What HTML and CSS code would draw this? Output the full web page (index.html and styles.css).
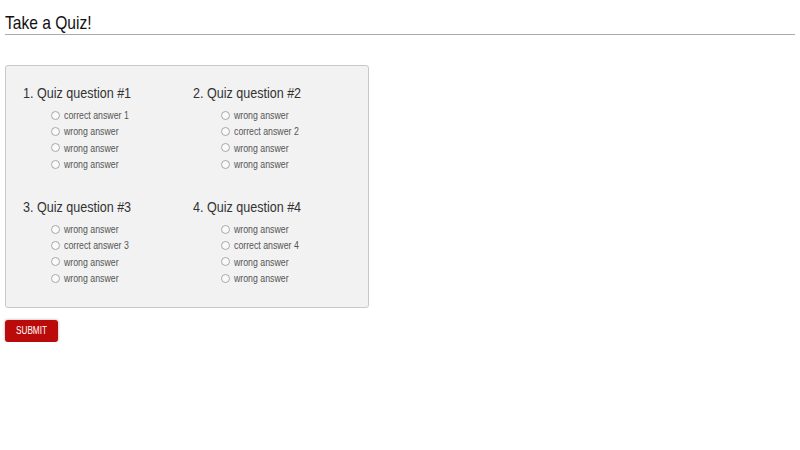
FILE: index.html
```html
<!DOCTYPE html>
<html>
<head>
<meta charset="utf-8">
<title>Take a Quiz!</title>
<link rel="stylesheet" href="styles.css">
</head>
<body>
<h1 class="title"><span class="narrow">Take a Quiz!</span></h1>
<form class="quiz">
  <div class="questions">
    <div class="question">
      <h2 class="q-title"><span class="narrow">1. Quiz question #1</span></h2>
      <ul class="answers">
        <li><label><input type="radio" name="q1"><span class="narrow">correct answer 1</span></label></li>
        <li><label><input type="radio" name="q1"><span class="narrow">wrong answer</span></label></li>
        <li><label><input type="radio" name="q1"><span class="narrow">wrong answer</span></label></li>
        <li><label><input type="radio" name="q1"><span class="narrow">wrong answer</span></label></li>
      </ul>
    </div>
    <div class="question">
      <h2 class="q-title"><span class="narrow">2. Quiz question #2</span></h2>
      <ul class="answers">
        <li><label><input type="radio" name="q2"><span class="narrow">wrong answer</span></label></li>
        <li><label><input type="radio" name="q2"><span class="narrow">correct answer 2</span></label></li>
        <li><label><input type="radio" name="q2"><span class="narrow">wrong answer</span></label></li>
        <li><label><input type="radio" name="q2"><span class="narrow">wrong answer</span></label></li>
      </ul>
    </div>
    <div class="question">
      <h2 class="q-title"><span class="narrow">3. Quiz question #3</span></h2>
      <ul class="answers">
        <li><label><input type="radio" name="q3"><span class="narrow">wrong answer</span></label></li>
        <li><label><input type="radio" name="q3"><span class="narrow">correct answer 3</span></label></li>
        <li><label><input type="radio" name="q3"><span class="narrow">wrong answer</span></label></li>
        <li><label><input type="radio" name="q3"><span class="narrow">wrong answer</span></label></li>
      </ul>
    </div>
    <div class="question">
      <h2 class="q-title"><span class="narrow">4. Quiz question #4</span></h2>
      <ul class="answers">
        <li><label><input type="radio" name="q4"><span class="narrow">wrong answer</span></label></li>
        <li><label><input type="radio" name="q4"><span class="narrow">correct answer 4</span></label></li>
        <li><label><input type="radio" name="q4"><span class="narrow">wrong answer</span></label></li>
        <li><label><input type="radio" name="q4"><span class="narrow">wrong answer</span></label></li>
      </ul>
    </div>
  </div>
  <button type="button" class="submit"><span class="narrow">SUBMIT</span></button>
</form>
</body>
</html>
```
FILE: styles.css
```css
html, body {
  margin: 0;
  padding: 0;
  background: #ffffff;
}
body {
  padding: 0 5px;
  font-family: "Liberation Sans", Arial, sans-serif;
  color: #222;
}
.narrow {
  display: inline-block;
  transform: scaleX(0.82);
  transform-origin: left center;
  white-space: nowrap;
}
.title {
  margin: 12px 0 0 0;
  font-size: 19px;
  line-height: 22px;
  font-weight: normal;
  color: #111;
  border-bottom: 1px solid #aaaaaa;
}
.quiz {
  margin: 30px 0 0 0;
}
.questions {
  width: 364px;
  height: 243px;
  box-sizing: border-box;
  background: #f2f2f2;
  border: 1px solid #c8c8c8;
  border-radius: 3px;
  padding: 18px 0 0 17px;
  display: grid;
  grid-template-columns: 170px 170px;
  grid-auto-rows: 114px;
}
.q-title {
  margin: 0 0 5px 0;
  font-size: 15.3px;
  line-height: 18px;
  font-weight: normal;
  color: #333;
}
.answers {
  list-style: none;
  margin: 0;
  padding: 0 0 0 28px;
}
.answers li {
  height: 16.33px;
  display: flex;
  align-items: center;
}
.answers label {
  display: flex;
  align-items: center;
  font-size: 10.7px;
  line-height: 12px;
  color: #555;
}
.answers input {
  -webkit-appearance: none;
  appearance: none;
  width: 9px;
  height: 9px;
  margin: 0 4px 0 0;
  box-sizing: border-box;
  border: 1px solid #a8a8a8;
  border-radius: 50%;
  background: #fafafa;
}
.submit {
  margin-top: 12px;
  display: block;
  width: 53px;
  height: 22px;
  padding: 0 0 0 11px;
  border: none;
  border-radius: 3px;
  background: #bb0a0a;
  box-shadow: 0 0 3px rgba(0, 0, 0, 0.35);
  color: #fff;
  font-family: "Liberation Sans", Arial, sans-serif;
  font-size: 10px;
  line-height: 22px;
  text-align: left;
}
```
